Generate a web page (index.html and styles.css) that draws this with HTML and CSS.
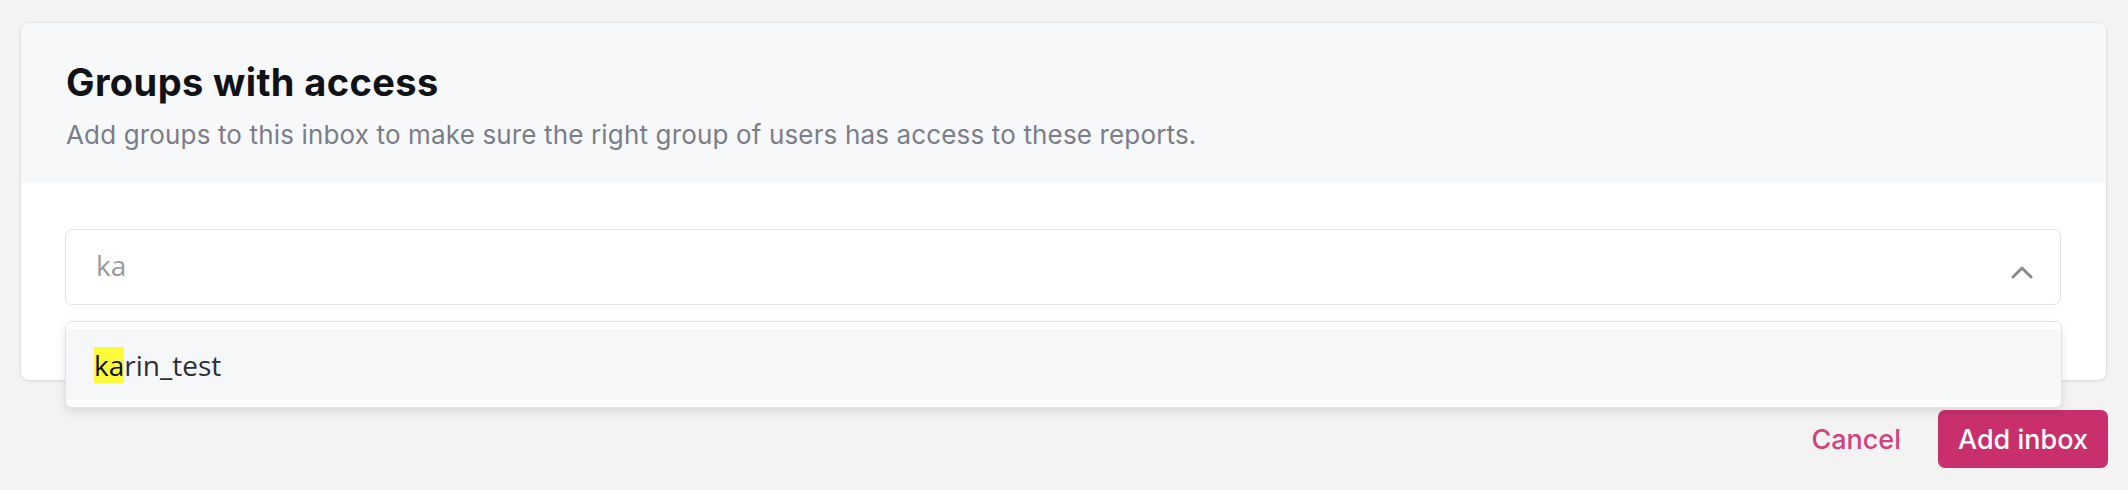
FILE: index.html
```html
<!DOCTYPE html>
<html lang="en">
<head>
<meta charset="utf-8">
<title>Groups with access</title>
<link rel="stylesheet" href="styles.css">
</head>
<body>
<div class="page">
  <section class="card">
    <header class="card-header">
      <h1 class="title">Groups with access</h1>
      <p class="subtitle">Add groups to this inbox to make sure the right group of users has access to these reports.</p>
    </header>
    <div class="card-body">
      <div class="select">
        <div class="select-control">
          <span class="select-value">ka</span>
          <svg class="chevron" width="22" height="14" viewBox="0 0 22 14" aria-hidden="true">
            <path d="M2 12 L11 3 L20 12" fill="none" stroke="#8a8a8a" stroke-width="3" stroke-linecap="round" stroke-linejoin="round"/>
          </svg>
        </div>
        <div class="select-menu">
          <div class="select-option"><mark class="match">ka</mark>rin_test</div>
        </div>
      </div>
    </div>
  </section>
  <footer class="actions">
    <button class="btn-link" type="button">Cancel</button>
    <button class="btn-primary" type="button">Add inbox</button>
  </footer>
</div>
</body>
</html>
```

FILE: styles.css
```css
* { box-sizing: border-box; }
html, body {
  margin: 0;
  padding: 0;
  background: #f3f3f3;
  height: 100%;
}
body {
  font-family: Inter, "Noto Sans", sans-serif;
}
.page {
  padding: 23px 22px 0 21px;
}
.card {
  background: #ffffff;
  border-radius: 8px;
  box-shadow: 0 0 0 1px rgba(0,0,0,0.04), 0 1px 4px rgba(0,0,0,0.08);
}
.card-header {
  background: #f7f8f9;
  border-radius: 8px 8px 0 0;
  padding: 38px 45px 0 45px;
  height: 160px;
}
.title {
  margin: 0;
  font-family: Inter, sans-serif;
  font-weight: 700;
  font-size: 38px;
  line-height: 43px;
  color: #111216;
  letter-spacing: 0.4px;
}
.subtitle {
  margin: 15px 0 0 0;
  font-family: Inter, sans-serif;
  font-size: 26px;
  line-height: 32px;
  color: #7b7d88;
  letter-spacing: 0.15px;
}
.card-body {
  padding: 46px 45px 75px 44px;
}
.select {
  position: relative;
}
.select-control {
  height: 76px;
  border: 1px solid #e4e4e6;
  border-radius: 7px;
  background: #fff;
  display: flex;
  align-items: center;
  justify-content: space-between;
  padding: 0 27px 0 30px;
}
.select-value {
  font-family: "Open Sans", "Noto Sans", sans-serif;
  font-size: 28px;
  color: #9a9a9a;
  margin-top: -4px;
}
.chevron {
  display: block;
  margin-top: 10px;
}
.select-menu {
  position: absolute;
  top: calc(100% + 16px);
  left: 0;
  right: -1px;
  background: #ffffff;
  border: 1px solid #e2e3e5;
  border-radius: 7px;
  padding: 7px 0;
  box-shadow: 0 4px 10px rgba(0,0,0,0.10);
}
.select-option {
  background: #f6f7f8;
  height: 71px;
  display: flex;
  align-items: center;
  padding: 0 28px;
  font-family: "Open Sans", "Noto Sans", sans-serif;
  font-size: 28px;
  color: #2f2f33;
}
.match {
  background: #fbfb3c;
  color: #111;
  line-height: 36px;
  display: inline-block;
}
.actions {
  display: flex;
  justify-content: flex-end;
  align-items: center;
  gap: 37px;
  margin-top: 30px;
  margin-right: -2px;
}
.btn-link {
  background: none;
  border: none;
  padding: 0;
  font-family: Inter, sans-serif;
  font-size: 27px;
  font-weight: 500;
  color: #d0437d;
}
.btn-primary {
  background: #c92f6c;
  border: none;
  border-radius: 7px;
  height: 58px;
  width: 170px;
  font-family: Inter, sans-serif;
  font-size: 27px;
  font-weight: 500;
  color: #ffffff;
}
```
